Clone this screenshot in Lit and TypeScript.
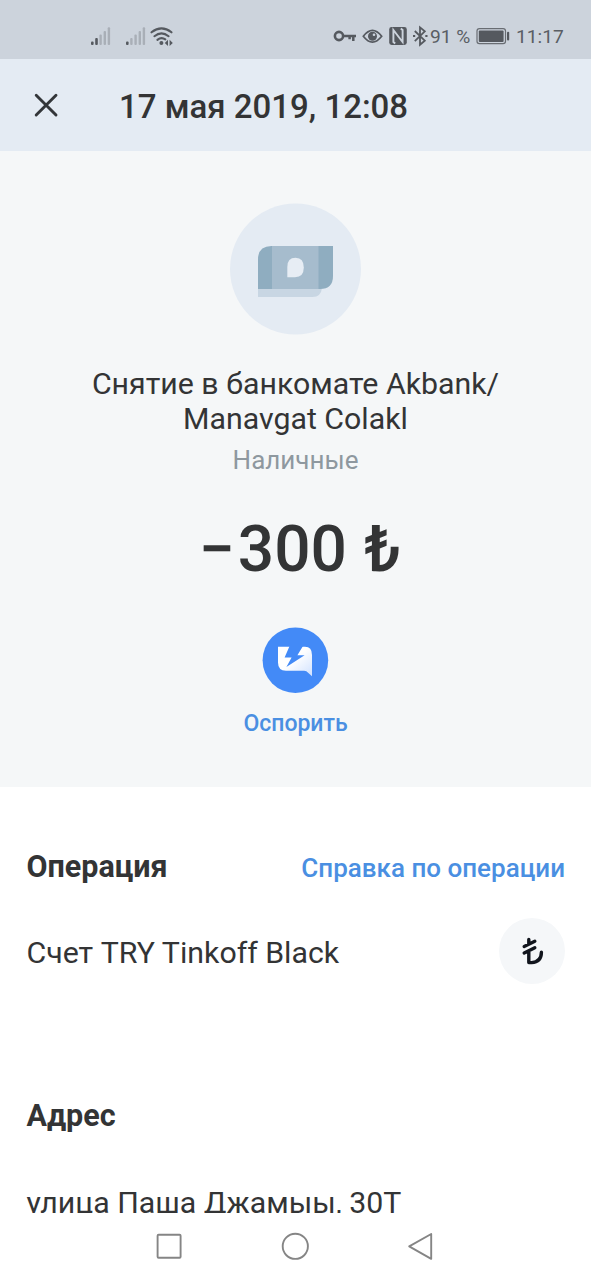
import { LitElement, html, css } from "lit";
import { customElement } from "lit/decorators.js";

@customElement("status-bar")
class StatusBar extends LitElement {
  static styles = css`
    :host { display: block; height: 59px; background: #ccd3dc; color: #5a5e64; }
    .bar { display: grid; grid-template-columns: 332px 98px 46px 40px 1fr; height: 59px; font: 400 19.2px/24px Roboto, sans-serif; }
    .text { padding-top: 25px; white-space: pre; }
    svg { display: block; }
  `;
  render() {
    return html`<div class="bar">
      <svg width="332" height="59" fill="#a9afb7">
        <rect x="91" y="41.5" width="2.6" height="3.5" rx="1" fill="#55595f"/>
        <rect x="95.2" y="38" width="2.6" height="7" rx="1" fill="#55595f"/>
        <rect x="99.4" y="34.5" width="2.4" height="10.5" rx="1"/>
        <rect x="103.6" y="31" width="2.4" height="14" rx="1"/>
        <rect x="107.7" y="27.3" width="2.4" height="17.7" rx="1"/>
        <rect x="126" y="41.5" width="2.6" height="3.5" rx="1" fill="#55595f"/>
        <rect x="130.2" y="38" width="2.4" height="7" rx="1"/>
        <rect x="134.4" y="34.5" width="2.4" height="10.5" rx="1"/>
        <rect x="138.6" y="31" width="2.4" height="14" rx="1"/>
        <rect x="142.7" y="27.3" width="2.4" height="17.7" rx="1"/>
        <g fill="none" stroke="#55595f" stroke-width="2.1" stroke-linecap="round">
          <path d="M151.5 32.3Q161.5 24.4 171.5 32.3"/>
          <path d="M154.4 36.2Q161.5 30.6 168.6 36.2"/>
          <path d="M157.4 39.8Q161.5 36.6 165.3 39.4"/>
        </g>
        <circle cx="161.4" cy="43" r="2" fill="#55595f"/>
        <path d="M168 39.8v6.2l-3.2-3.1zM169.6 39.8v6.2l3.2-3.1z" fill="#55595f"/>
      </svg>
      <svg width="98" height="59" viewBox="332 0 98 59" fill="none" stroke="#55595f" stroke-width="2">
        <circle cx="339" cy="36" r="4.1" stroke-width="2.6"/>
        <path d="M343.2 36H356M353.3 36v5M349.6 36v3.2" stroke-width="2.5"/>
        <path d="M363.3 36.3Q372.4 24.6 381.7 36.3Q372.4 48 363.3 36.3Z" stroke-width="1.7"/>
        <circle cx="372.5" cy="36.2" r="4.5" fill="#55595f" stroke="none"/>
        <circle cx="374" cy="34.7" r="1.3" fill="#ccd3dc" stroke="none"/>
        <rect x="389.2" y="27" width="17.6" height="18" rx="2.4" fill="#55595f" stroke="none"/>
        <path d="M395.2 43.5L393.4 42V30L402.6 42V30L400.8 28.5" stroke="#ccd3dc" stroke-width="1.9"/>
        <path d="M414.8 31L424.8 40.6L420 44.8V27.4L424.8 31.4L414.8 41.2" stroke-width="1.8"/>
        <path d="M413 36h2.2M425.3 36h2.2" stroke-width="2.1"/>
      </svg>
      <span class="text">91 %</span>
      <svg width="40" height="59" viewBox="476 0 40 59">
        <rect x="477" y="28.7" width="28.5" height="15" rx="2.4" fill="none" stroke="#696d73" stroke-width="1.2"/>
        <rect x="478.8" y="30.5" width="24.8" height="11.5" rx="1" fill="#55595f"/>
        <rect x="507" y="31.8" width="2.2" height="8.6" rx="1" fill="#55595f"/>
      </svg>
      <span class="text">11:17</span>
    </div>`;
  }
}

@customElement("nav-buttons")
class NavButtons extends LitElement {
  static styles = css`
    :host { display: block; background: #fff; }
    svg { display: block; }
  `;
  render() {
    return html`<svg width="591" height="67" viewBox="0 1213 591 67" fill="none" stroke="#858585" stroke-width="1.9" stroke-linejoin="round">
      <rect x="157.6" y="1234.8" width="23" height="23" rx="1"/>
      <circle cx="295.3" cy="1246.3" r="12.6"/>
      <path d="M431.2 1234L409.2 1246.4L431.2 1258.8Z"/>
    </svg>`;
  }
}

@customElement("app-root")
class AppRoot extends LitElement {
  static styles = css`
    :host { display: flex; flex-direction: column; width: 591px; height: 1280px; overflow: hidden; background: #fff; font-family: Roboto, sans-serif; color: #333435; }
    svg { display: block; }
    .header { display: flex; height: 92px; background: #e4ebf3; }
    .title { margin: 0; padding: 28px 0 0 27px; font-size: 33px; font-weight: 500; line-height: 40px; white-space: nowrap; }
    .hero { box-sizing: border-box; height: 636px; padding-top: 52px; background: #f5f7f8; display: flex; flex-direction: column; align-items: center; white-space: nowrap; text-align: center; }
    .merchant { margin-top: 31px; font-size: 30.3px; line-height: 35px; }
    .category { margin-top: 9px; font-size: 26px; line-height: 30px; color: #8e989f; }
    .amount { margin-top: 40px; padding-left: 9px; font-size: 64px; line-height: 70px; font-weight: 500; word-spacing: 1.5px; }
    .minus { margin-right: 3px; }
    .dispute { margin-top: 42px; display: flex; flex-direction: column; align-items: center; gap: 17px; color: #4a8fe2; font-size: 23px; line-height: 28px; font-weight: 500; }
    .details { height: 426px; overflow: hidden; box-sizing: border-box; padding: 62px 26px 0 26.5px; font-size: 30.3px; line-height: 36px; white-space: nowrap; }
    .row { display: flex; justify-content: space-between; align-items: baseline; }
    .heading { margin: 0; font-size: 30.5px; font-weight: 700; }
    .link { font-size: 26px; font-weight: 500; color: #4a8fe2; }
    .account { margin-top: 32px; display: flex; justify-content: space-between; align-items: center; height: 66px; }
    .name { padding-top: 3px; }
    .address-heading { margin-top: 114px; }
    .address { margin-top: 51px; }
  `;
  render() {
    return html`
      <status-bar></status-bar>
      <header class="header">
        <svg width="92" height="92" viewBox="0 59 92 92"><path d="M36.2 95.2L56 115M56 95.2L36.2 115" fill="none" stroke="#333639" stroke-width="2.9" stroke-linecap="round"/></svg>
        <h1 class="title">17 мая 2019, 12:08</h1>
      </header>
      <section class="hero">
        <svg width="131" height="132" viewBox="230 203 131 132">
          <circle cx="295.5" cy="269" r="65.5" fill="#e4ebf3"/>
          <path d="M258 288H322Q321 297 312.5 297H258Z" fill="#c8d6e3"/>
          <path d="M258 289V259.5Q258 246 271.5 246H333V276Q333 289 320 289Z" fill="#8fadc0"/>
          <rect x="272" y="246" width="46.5" height="43" fill="#a6bccd"/>
          <path d="M287.3 277.2V267Q287.3 257.8 295.6 257.8Q303.8 258 303.8 267.5Q303.8 277.2 295 277.2Z" fill="#e7edf4"/>
        </svg>
        <div class="merchant">Снятие в банкомате Akbank/<br>Manavgat Colakl</div>
        <div class="category">Наличные</div>
        <div class="amount"><span class="minus">−</span>300 ₺</div>
        <div class="dispute">
          <svg width="67" height="66" viewBox="262 627 67 66">
            <defs><linearGradient id="bubble" x1="0" y1="0" x2="1" y2="1"><stop offset="0" stop-color="#fff"/><stop offset=".45" stop-color="#fff"/><stop offset="1" stop-color="#cfe1ff"/></linearGradient></defs>
            <circle cx="295.4" cy="660.2" r="32.8" fill="#438af7"/>
            <path d="M278 646.8H305Q312 646.8 312 655V676.3L306.4 671.3Q305.5 670.7 304 670.7H286Q278 670.7 278 662.5Z" fill="url(#bubble)"/>
            <path d="M289.6 646L284.6 657.4H291.6L286.4 667L304.6 655.3H297.4L303 646Z" fill="#438af7"/>
          </svg>
          <span>Оспорить</span>
        </div>
      </section>
      <section class="details">
        <div class="row"><h2 class="heading">Операция</h2><span class="link">Справка по операции</span></div>
        <div class="account">
          <span class="name">Счет TRY Tinkoff Black</span>
          <svg width="66" height="66" viewBox="499 918 66 66">
            <circle cx="532" cy="951" r="33" fill="#f5f7f9"/>
            <path d="M528.8 939.5V944M524.2 946.5L534.8 941.3M524.2 953L534.8 947.8M528.8 951V962.6H531.5Q541.4 962 541.4 952.3" fill="none" stroke="#11151d" stroke-width="3.4" stroke-linecap="round" stroke-linejoin="round"/>
          </svg>
        </div>
        <h2 class="heading address-heading">Адрес</h2>
        <div class="address">улица Паша Джамыы, 30Т</div>
      </section>
      <nav-buttons></nav-buttons>
    `;
  }
}
